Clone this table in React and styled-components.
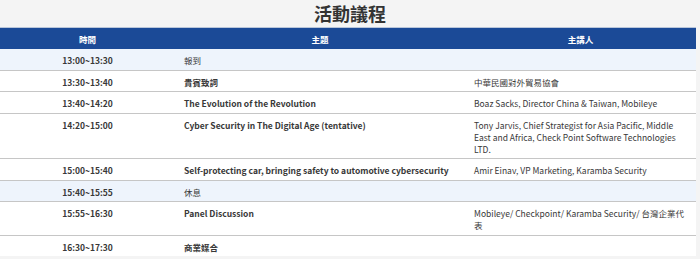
import React from 'react';
import styled, { createGlobalStyle } from 'styled-components';

const GlobalStyle = createGlobalStyle`
  body {
    margin: 0;
    background: #f4f4f4;
    font-family: "Noto Sans CJK TC", "Noto Sans", sans-serif;
    color: #333;
  }
`;

const Page = styled.div`
  width: 700px;
`;

const Title = styled.h2`
  margin: 0;
  height: 27px;
  line-height: 26px;
  font-size: 18px;
  font-weight: 700;
  text-align: center;
  color: #333;
`;

const Table = styled.table`
  width: 696px;
  border-collapse: collapse;
  table-layout: fixed;
  background: #fff;
  font-size: 8.5px;
  line-height: 12px;
`;

const HeadCell = styled.th`
  background: #1b4a97;
  color: #fff;
  font-weight: 700;
  font-size: 8.5px;
  height: 21px;
  padding: 0;
  text-align: center;
  border-top: 1px solid #b9c6da;
`;

const Row = styled.tr`
  background: ${p => (p.$shade ? '#eef4fc' : '#fff')};
  border-bottom: 1px solid #c6c6c6;
  &:last-child {
    border-bottom: none;
  }
`;

const Cell = styled.td`
  vertical-align: top;
  padding: 5px 9px 3.5px;
  text-align: ${p => (p.$center ? 'center' : 'left')};
  font-weight: ${p => (p.$bold ? 700 : 400)};
  color: #383838;
`;

const agenda = [
  { time: '13:00~13:30', topic: '報到', shade: true },
  { time: '13:30~13:40', topic: '貴賓致詞', bold: true, speaker: '中華民國對外貿易協會' },
  { time: '13:40~14:20', topic: 'The Evolution of the Revolution', bold: true, speaker: 'Boaz Sacks, Director China & Taiwan, Mobileye' },
  {
    time: '14:20~15:00',
    topic: 'Cyber Security in The Digital Age (tentative)',
    bold: true,
    speaker: 'Tony Jarvis, Chief Strategist for Asia Pacific, Middle East and Africa, Check Point Software Technologies LTD.',
  },
  {
    time: '15:00~15:40',
    topic: 'Self-protecting car, bringing safety to automotive cybersecurity',
    bold: true,
    speaker: 'Amir Einav, VP Marketing, Karamba Security',
  },
  { time: '15:40~15:55', topic: '休息', shade: true },
  { time: '15:55~16:30', topic: 'Panel Discussion', bold: true, speaker: 'Mobileye/ Checkpoint/ Karamba Security/ 台灣企業代表' },
  { time: '16:30~17:30', topic: '商業媒合', bold: true },
];

export default function App() {
  return (
    <Page>
      <GlobalStyle />
      <Title>活動議程</Title>
      <Table>
        <colgroup>
          <col style={{ width: 175 }} />
          <col style={{ width: 290 }} />
          <col style={{ width: 231 }} />
        </colgroup>
        <thead>
          <tr>
            <HeadCell>時間</HeadCell>
            <HeadCell>主題</HeadCell>
            <HeadCell>主講人</HeadCell>
          </tr>
        </thead>
        <tbody>
          {agenda.map((item, i) => (
            <Row key={i} $shade={item.shade}>
              <Cell $center $bold>{item.time}</Cell>
              <Cell $bold={item.bold}>{item.topic}</Cell>
              <Cell>{item.speaker || ''}</Cell>
            </Row>
          ))}
        </tbody>
      </Table>
    </Page>
  );
}
